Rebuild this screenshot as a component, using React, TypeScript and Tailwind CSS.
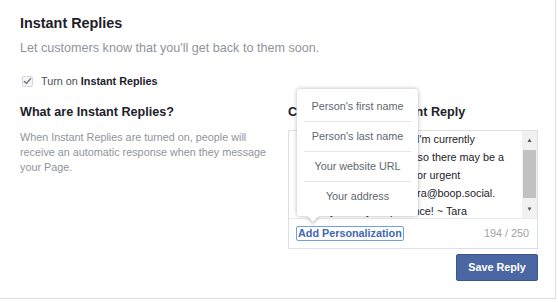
import React from 'react';

const replyLines = [
  ['Thanks for reaching out! ', "I'm currently"],
  ['away from my computer, ', 'so there may be a'],
  ['delay in my responses. ', 'For urgent'],
  ['requests, please email ta', 'ra@boop.social.'],
  ['Thank you for your patie', 'nce! ~ Tara'],
];

const tokens = ["Person's first name", "Person's last name", 'Your website URL', 'Your address'];

function CheckIcon() {
  return (
    <svg width="9" height="8" viewBox="0 0 9 8">
      <path d="M1 4.2 L3.4 6.4 L8 1.2" fill="none" stroke="#7f8389" strokeWidth="1.6" />
    </svg>
  );
}

export default function App() {
  return (
    <div className="w-[558px] h-[302px] bg-white font-['Liberation_Sans',Arial,sans-serif] text-[#1d2129]">
      <div className="w-[556px] h-[299px] border-r border-b border-[#dddfe2] pl-[20px] pt-[14px]">
        <h1 className="text-[14.4px] leading-[18px] font-bold">Instant Replies</h1>
        <p className="mt-[8px] text-[12.6px] leading-[16px] text-[#90949c]">
          Let customers know that you'll get back to them soon.
        </p>

        <label className="mt-[17px] flex items-center h-[16px] text-[10.8px] text-[#4b4f56]">
          <span className="ml-[2px] w-[11px] h-[11px] rounded-[2px] border border-[#d3d6db] bg-[#f5f6f7] flex items-center justify-center">
            <CheckIcon />
          </span>
          <span className="ml-[8px]">
            Turn on <span className="font-bold text-[#1d2129]">Instant Replies</span>
          </span>
        </label>

        <div className="mt-[15px] flex gap-[20px]">
          {/* left column */}
          <div className="w-[248px]">
            <h2 className="text-[12.6px] leading-[16px] font-bold">What are Instant Replies?</h2>
            <p className="mt-[10px] text-[10.8px] leading-[15px] text-[#90949c]">
              When Instant Replies are turned on, people will receive an automatic response when they message
              your Page.
            </p>
          </div>

          {/* right column */}
          <div className="w-[250px] relative">
            <h2 className="text-[12.6px] leading-[16px] font-bold">Customize Your Instant Reply</h2>

            <div className="mt-[10px] border border-[#dddfe2] bg-white">
              <div className="h-[87px] flex overflow-hidden">
                <div className="flex-1 pl-[8px] -mt-px text-[10.8px] leading-[18px] text-[#1d2129] whitespace-nowrap overflow-hidden">
                  {replyLines.map(([a, b]) => (
                    <div key={b}>
                      {a}
                      {b}
                    </div>
                  ))}
                </div>
                <div className="w-[15px] bg-[#f1f1f1] flex flex-col items-center">
                  <div className="h-[18px] flex items-center justify-center text-[6px] text-[#505050]">▲</div>
                  <div className="mt-px w-[13px] h-[48px] bg-[#c1c1c1]" />
                  <div className="flex-1" />
                  <div className="h-[18px] flex items-center justify-center text-[6px] text-[#505050]">▼</div>
                </div>
              </div>
              <div className="h-[30px] border-t border-[#e9ebee] flex items-center justify-between pl-[8px] pr-[8px]">
                <span className="text-[10.8px] leading-[13px] font-bold text-[#4267b2] outline outline-[1.5px] outline-[#6fa0e3] rounded-[1px] px-px">
                  Add Personalization
                </span>
                <span className="text-[10.8px] text-[#a0a3a9]">194 / 250</span>
              </div>
            </div>

            <div className="mt-[5px] flex justify-end">
              <button className="h-[27px] w-[82px] bg-[#4a66a3] border border-[#3b5590] rounded-[2px] text-white text-[10.8px] font-bold">
                Save Reply
              </button>
            </div>

            {/* personalization menu */}
            <div className="absolute left-[9px] top-[-15px] w-[121px] bg-white rounded-[3px] shadow-[0_0_4px_rgba(0,0,0,0.3)] pt-[3px] pb-[5px]">
              {tokens.map((t, i) => (
                <div key={t}>
                  {i > 0 && <div className="mx-[7px] border-t border-[#e5e6e9]" />}
                  <div className="h-[29px] flex items-center justify-center text-[10.8px] text-[#606770]">{t}</div>
                </div>
              ))}
              <div className="absolute left-[12px] bottom-[-4px] w-[8px] h-[8px] bg-white rotate-45 shadow-[2px_2px_3px_rgba(0,0,0,0.18)]" />
            </div>
          </div>
        </div>
      </div>
    </div>
  );
}
